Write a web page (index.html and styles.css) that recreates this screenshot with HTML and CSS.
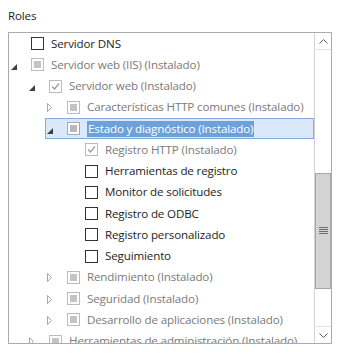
FILE: index.html
```html
<!DOCTYPE html>
<html lang="es">
<head>
    <meta charset="UTF-8">
    <title>Roles</title>
    <link rel="stylesheet" href="styles.css">
</head>
<body>

    <div class="panel">
        <h2 class="title">Roles</h2>

        <div class="tree-box">
            <div class="tree">
                <div class="row lv0"><div class="node"><span class="exp"></span><span class="cb"></span><span class="label">Servidor DNS</span></div></div>
                <div class="row lv0 off"><div class="node"><span class="exp"><svg width="6" height="6"><polygon points="6,0 6,6 0,6" fill="#404040"/></svg></span><span class="cb part"></span><span class="label">Servidor web (IIS) (Instalado)</span></div></div>
                <div class="row lv1 off"><div class="node"><span class="exp"><svg width="6" height="6"><polygon points="6,0 6,6 0,6" fill="#404040"/></svg></span><span class="cb"><svg width="11" height="11"><polyline points="2,5.5 4.5,8 9,2.5" fill="none" stroke="#9a9a9a" stroke-width="1.3"/></svg></span><span class="label">Servidor web (Instalado)</span></div></div>
                <div class="row lv2 off"><div class="node"><span class="exp"><svg width="6" height="9"><polygon points="0.5,0.5 4.5,4.5 0.5,8.5" fill="none" stroke="#a6a6a6"/></svg></span><span class="cb part"></span><span class="label">Características HTTP comunes (Instalado)</span></div></div>
                <div class="row lv2"><div class="node sel"><span class="exp"><svg width="6" height="6"><polygon points="6,0 6,6 0,6" fill="#404040"/></svg></span><span class="cb part dim"></span><span class="label">Estado y diagnóstico (Instalado)</span></div></div>
                <div class="row lv3 off"><div class="node"><span class="exp"></span><span class="cb"><svg width="11" height="11"><polyline points="2,5.5 4.5,8 9,2.5" fill="none" stroke="#9a9a9a" stroke-width="1.3"/></svg></span><span class="label">Registro HTTP (Instalado)</span></div></div>
                <div class="row lv3"><div class="node"><span class="exp"></span><span class="cb"></span><span class="label">Herramientas de registro</span></div></div>
                <div class="row lv3"><div class="node"><span class="exp"></span><span class="cb"></span><span class="label">Monitor de solicitudes</span></div></div>
                <div class="row lv3"><div class="node"><span class="exp"></span><span class="cb"></span><span class="label">Registro de ODBC</span></div></div>
                <div class="row lv3"><div class="node"><span class="exp"></span><span class="cb"></span><span class="label">Registro personalizado</span></div></div>
                <div class="row lv3"><div class="node"><span class="exp"></span><span class="cb"></span><span class="label">Seguimiento</span></div></div>
                <div class="row lv2 off"><div class="node"><span class="exp"><svg width="6" height="9"><polygon points="0.5,0.5 4.5,4.5 0.5,8.5" fill="none" stroke="#a6a6a6"/></svg></span><span class="cb part"></span><span class="label">Rendimiento (Instalado)</span></div></div>
                <div class="row lv2 off"><div class="node"><span class="exp"><svg width="6" height="9"><polygon points="0.5,0.5 4.5,4.5 0.5,8.5" fill="none" stroke="#a6a6a6"/></svg></span><span class="cb part"></span><span class="label">Seguridad (Instalado)</span></div></div>
                <div class="row lv2 off"><div class="node"><span class="exp"><svg width="6" height="9"><polygon points="0.5,0.5 4.5,4.5 0.5,8.5" fill="none" stroke="#a6a6a6"/></svg></span><span class="cb part"></span><span class="label">Desarrollo de aplicaciones (Instalado)</span></div></div>
                <div class="row lv1 off"><div class="node"><span class="exp"><svg width="6" height="9"><polygon points="0.5,0.5 4.5,4.5 0.5,8.5" fill="none" stroke="#a6a6a6"/></svg></span><span class="cb part"></span><span class="label">Herramientas de administración (Instalado)</span></div></div>
            </div>

            <!-- Vertical scrollbar -->
            <div class="scrollbar">
                <div class="sb-btn">
                    <svg width="9" height="5"><polyline points="0.5,4.5 4.5,0.5 8.5,4.5" fill="none" stroke="#606060"/></svg>
                </div>
                <div class="sb-track">
                    <div class="sb-space top"></div>
                    <div class="sb-thumb">
                        <svg width="9" height="8"><g stroke="#6e6e6e"><line x1="0" y1="0.5" x2="9" y2="0.5"/><line x1="0" y1="2.5" x2="9" y2="2.5"/><line x1="0" y1="4.5" x2="9" y2="4.5"/><line x1="0" y1="6.5" x2="9" y2="6.5"/></g></svg>
                    </div>
                    <div class="sb-space bottom"></div>
                </div>
                <div class="sb-btn">
                    <svg width="9" height="5"><polyline points="0.5,0.5 4.5,4.5 8.5,0.5" fill="none" stroke="#606060"/></svg>
                </div>
            </div>
        </div>
    </div>

</body>
</html>
```

FILE: styles.css
```css
/* General Styles */
* {
    margin: 0;
    padding: 0;
    box-sizing: border-box;
}

body {
    font-family: 'Open Sans', 'Noto Sans', sans-serif;
    font-size: 11.6px;
    letter-spacing: -0.15px;
    background-color: #fff;
    color: #1e1e1e;
}

/* Panel */
.panel {
    padding: 7px 0 0 8px;
}

.title {
    font-size: 11.6px;
    font-weight: normal;
    line-height: 18px;
    height: 25px;
    color: #1e1e1e;
}

/* Tree Box */
.tree-box {
    display: flex;
    width: 324px;
    height: 312px;
    border: 1px solid #ababab;
    background-color: #fff;
}

.tree {
    flex: 1;
    overflow: hidden;
}

.row {
    display: flex;
    height: 21.25px;
}

.lv0 { padding-left: 0; }
.lv1 { padding-left: 18px; }
.lv2 { padding-left: 36px; }
.lv3 { padding-left: 54px; }

.node {
    flex: 1;
    display: flex;
    align-items: center;
    border: 1px solid transparent;
    padding-left: 1px;
    white-space: nowrap;
}

.node.sel {
    background-color: #d9e8fb;
    border-color: #84acdd;
}

/* Expander Arrow */
.exp {
    width: 20px;
    height: 10px;
    display: flex;
    align-items: flex-end;
}

/* Checkbox */
.cb {
    width: 13px;
    height: 13px;
    border: 1px solid #333;
    background-color: #fff;
    display: flex;
    align-items: center;
    justify-content: center;
    margin-right: 7px;
    flex-shrink: 0;
}

.off .cb {
    border-color: #bcbcbc;
}

.cb.part {
    border-color: #bcbcbc;
}

.cb.part::after {
    content: "";
    width: 7px;
    height: 7px;
    background-color: #c4c4c4;
}

.cb.dim {
    border-color: #a8a8a8;
}

.cb.dim::after {
    background-color: #b8b8b8;
}

/* Labels */
.label {
    color: #1e1e1e;
    line-height: 16px;
}

.off .label {
    color: #7a7a7a;
}

.sel .label {
    background-color: #6ea1d9;
    color: #fff;
    padding: 0 1px;
}

/* Scrollbar */
.scrollbar {
    width: 17px;
    display: flex;
    flex-direction: column;
    border-left: 1px solid #d2d2d2;
    background-color: #fff;
}

.sb-btn {
    height: 17px;
    display: flex;
    align-items: center;
    justify-content: center;
    border-bottom: 1px solid #e2e2e2;
}

.sb-btn:last-child {
    border-bottom: none;
    border-top: 1px solid #e2e2e2;
}

.sb-track {
    flex: 1;
    display: flex;
    flex-direction: column;
}

.sb-space.top {
    height: 123px;
}

.sb-space.bottom {
    flex: 1;
}

.sb-thumb {
    height: 116px;
    background-color: #d4d4d4;
    border: 1px solid #a6a6a6;
    display: flex;
    align-items: center;
    justify-content: center;
}
```
